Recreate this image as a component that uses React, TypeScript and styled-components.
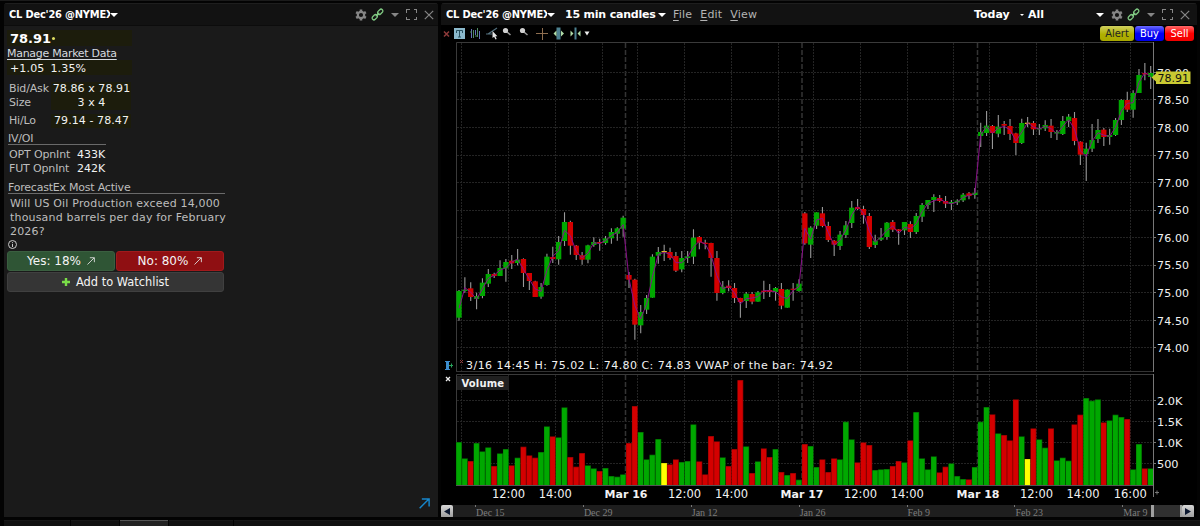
import React from "react";
import styled, { createGlobalStyle } from "styled-components";

const Global = createGlobalStyle`
  *, *::before, *::after { box-sizing: border-box; }
  html, body { margin: 0; padding: 0; background: #040404; }
  body { font-family: "DejaVu Sans", Verdana, sans-serif; font-size: 11px; color: #f0f0f0; overflow: hidden; }
`;

/* ---------- window shell ---------- */
const Screen = styled.main`
  width: 1200px; height: 526px; display: flex; flex-direction: column;
  background: #030303; border-top: 1px solid #1b1b1b; padding-top: 2px; overflow: hidden;
`;
const Panels = styled.div`
  display: flex; gap: 3px; height: 514px; padding: 0 3px 0 4px;
`;
const Panel = styled.section<{ $width: number; $bg: string }>`
  width: ${(p) => p.$width}px; height: 514px; background: ${(p) => p.$bg};
  display: flex; flex-direction: column; border-radius: 3px 3px 0 0; overflow: hidden; flex: none;
`;
const TitleBar = styled.header<{ $right: number }>`
  height: 22px; flex: none; display: flex; align-items: center; background: #121212;
  border-top: 1px solid #1e1e1e; padding: 0 ${(p) => p.$right}px 0 5px; white-space: nowrap;
`;
const Symbol = styled.span`
  font-family: "DejaVu Sans Condensed", "DejaVu Sans", sans-serif; font-stretch: condensed; letter-spacing: -0.2px;
  font-weight: 700; width: 101px; overflow: hidden; line-height: 16px; color: #fff; flex: none;
`;
const BoldLabel = styled.span<{ $width: number; $track?: number }>`
  font-weight: 700; color: #fff; width: ${(p) => p.$width}px; flex: none; line-height: 16px;
  letter-spacing: ${(p) => p.$track ?? 0}px;
`;
const Caret = styled.i<{ $half?: number; $color?: string; $gap?: number }>`
  width: 0; height: 0; flex: none; margin-right: ${(p) => p.$gap ?? 0}px;
  border: ${(p) => p.$half ?? 4}px solid transparent; border-bottom: 0;
  border-top-color: ${(p) => p.$color ?? "#fff"};
`;
const MenuItem = styled.span`
  color: #b4b4b4; margin-right: 8px; line-height: 16px; letter-spacing: 0.2px;
`;
const Mnemonic = styled.span`text-decoration: underline; text-underline-offset: 2px;`;
const Spacer = styled.div`flex: 1;`;
const WindowTools = styled.div`
  display: grid; grid-template-columns: repeat(5, 17px); place-items: center; flex: none;
`;

/* ---------- quote panel ---------- */
const Quote = styled.div`
  flex: 1; display: flex; flex-direction: column; padding: 4px 3px 0 3px; line-height: 14px; color: #bdbdbd;
  border-top: 1px solid #0c0c0c;
`;
const Shade = styled.div<{ $h: number }>`
  width: 125px; height: ${(p) => p.$h}px; background: #1c1c0c; color: #f2f2f2; padding: 2px 0 0 3px;
  display: flex; align-items: center; gap: 6px; letter-spacing: 0.15px;
`;
const Last = styled(Shade)`font-size: 13px; font-weight: 700; color: #fff; gap: 1px; letter-spacing: 0; padding-top: 1px;`;
const Tick = styled.i`width: 3px; height: 3px; border-radius: 2px; background: #dede62;`;
const Manage = styled.a`
  width: max-content; color: #d5d9df; text-decoration: underline; text-underline-offset: 2px; height: 14px; line-height: 15px;
  letter-spacing: -0.28px;
`;
const Pair = styled.div<{ $mt?: number }>`
  display: flex; height: 14px; margin-top: ${(p) => p.$mt ?? 0}px; padding-left: 2px; align-items: center;
`;
const Key = styled.span<{ $w: number }>`
  width: ${(p) => p.$w}px; flex: none; white-space: nowrap; letter-spacing: -0.15px;
`;
const Value = styled.span<{ $shade?: boolean }>`
  color: #f2f2f2; text-align: center; height: 14px; line-height: 14px; white-space: nowrap;
  ${(p) => p.$shade && "background: #1c1c0c; width: 80px; letter-spacing: 0.08px; padding-left: 1px;"}
`;
const SectionTitle = styled.div<{ $w: number; $mt: number }>`
  width: ${(p) => p.$w}px; margin: ${(p) => p.$mt}px 0 0 1px; height: 14px; line-height: 15px;
  border-bottom: 1px solid #6a6a6a; white-space: nowrap; letter-spacing: -0.22px;
`;
const Question = styled.p`
  margin: 3px 0 0 3px; width: 220px; line-height: 14.2px; height: 42px; letter-spacing: 0.18px;
`;
const ButtonRow = styled.div`display: flex; gap: 1px; margin-bottom: 1px;`;
const Button = styled.button<{ $bg: string; $edge: string; $w: number; $size: number }>`
  width: ${(p) => p.$w}px; height: 20px; padding: 0; border: 1px solid ${(p) => p.$edge}; border-radius: 3px;
  background: ${(p) => p.$bg}; color: #f4f4f4; font-family: inherit; font-size: ${(p) => p.$size}px;
  display: flex; justify-content: center; align-items: center; gap: 6px;
`;
const Corner = styled.div`display: flex; justify-content: flex-end; margin: auto 5px 8px 0;`;

/* ---------- chart panel ---------- */
const ChartTools = styled.div`
  height: 17px; flex: none; display: flex; background: #000; justify-content: space-between;
`;
const Orders = styled.div`display: flex; gap: 1px; padding: 1px 3px 0 0;`;
const Order = styled.button<{ $w: number; $bg: string; $fg: string }>`
  width: ${(p) => p.$w}px; height: 15px; border: 0; border-radius: 3px; padding: 0; background: ${(p) => p.$bg};
  color: ${(p) => p.$fg}; font: 11px/15px "DejaVu Sans Condensed", "DejaVu Sans", sans-serif; font-stretch: condensed;
`;
const Plot = styled.svg`
  display: block; flex: none; background: #000;
  text { font-family: "DejaVu Sans", Verdana, sans-serif; fill: #f2f2f2; }
`;
const Scroll = styled.div`
  height: 13px; display: flex; width: 753px; background: #1e1e1e; margin-top: 1px; flex: none;
`;
const ScrollArrow = styled.div`
  width: 12px; height: 13px; background: linear-gradient(#d6d6d6, #9a9a9a); border-radius: 2px;
  display: flex; align-items: center; justify-content: center; flex: none;
`;
const Dates = styled.div`flex: 1; display: flex; padding-left: 22px; overflow: hidden;`;
const DateMark = styled.span`
  width: 107.9px; flex: none; font: 10px/15px "Liberation Serif", "Times New Roman", serif; color: #7d7d7d; padding-left: 1px;
  background: linear-gradient(#777, #777) 0 0 / 1px 2px no-repeat;
`;
const Thumb = styled.div`
  width: 31px; background: #303030; border-left: 3px solid #a0a0a0; border-right: 2px solid #a0a0a0; flex: none; margin-left: -1px;
`;

/* ---------- bottom strip ---------- */
const Strip = styled.footer`display: flex; gap: 1px; height: 6px; margin-top: 3px; padding-left: 4px;`;
const Tab = styled.div<{ $w?: number; $on?: boolean }>`
  ${(p) => (p.$w ? `width: ${p.$w}px;` : "flex: 1;")}
  background: ${(p) => (p.$on ? "#222" : "#111")}; border-top: 1px solid ${(p) => (p.$on ? "#555" : "#181818")};
`;

/* ---------- icons ---------- */
const Gear = () => (
  <svg width="12" height="12" viewBox="0 0 12 12">
    <circle cx="6" cy="6" r="3.2" fill="none" stroke="#868686" strokeWidth="2.2" />
    {[0, 60, 120].map((a) => (
      <path key={a} d="M6 .4v2M6 9.6v2" stroke="#868686" strokeWidth="2.6" transform={`rotate(${a} 6 6)`} />
    ))}
  </svg>
);
const Link = () => (
  <svg width="13" height="13" viewBox="0 0 13 13" fill="none" stroke="#7fc882" strokeWidth="1.3">
    <rect x="-3" y="-1.8" width="6" height="3.6" rx="1.8" transform="translate(9.2 3.8) rotate(-45)" />
    <rect x="-3" y="-1.8" width="6" height="3.6" rx="1.8" transform="translate(3.8 9.2) rotate(-45)" />
    <path d="M4.8 8.2l3.4-3.4" />
  </svg>
);
const Expand = () => (
  <svg width="11" height="11" viewBox="0 0 11 11" fill="none" stroke="#868686" shapeRendering="crispEdges">
    <path d="M.5 3.5v-3h3M7.5.5h3v3M10.5 7.5v3h-3M3.5 10.5h-3v-3" />
  </svg>
);
const Close = () => (
  <svg width="10" height="10" viewBox="0 0 10 10" stroke="#868686" strokeWidth="1.2">
    <path d="M.8.8l8.4 8.4M9.2.8L.8 9.2" />
  </svg>
);
const Controls = () => (
  <WindowTools>
    <Gear />
    <Link />
    <Caret $half={4.5} $color="#868686" />
    <Expand />
    <Close />
  </WindowTools>
);
const ArrowUp = ({ size = 8, color = "#e0e0e0" }: { size?: number; color?: string }) => (
  <svg width={size} height={size} viewBox="0 0 10 10" fill="none" stroke={color} strokeWidth={size > 8 ? 1.3 : 1.1}>
    <path d={size > 8 ? "M.6 9.4L9 1M2.6.9h6.6v6.8" : "M.6 9.4L9 1M3.6.9h5.6v5.6"} />
  </svg>
);
const ToolIcons = () => (
  <svg width="160" height="17" viewBox="441 25 160 17" fill="none">
    <path d="M444 31.5l5 5M449 31.5l-5 5" stroke="#8d3a3a" strokeWidth="1.5" />
    <rect x="454" y="28" width="11" height="11" fill="#8bb9cc" />
    <path d="M456.5 33v-2.5h6V33M459.5 30.5v6.5M458 37h3" stroke="#28505f" />
    <path d="M471.5 29v9M475.5 30v5M479.5 31v8" stroke="#6470b8" />
    <path d="M473.5 30v8M477.5 28v9M470 32h2M475 36h3" stroke="#4f8a62" />
    <path d="M486 34h6M488 34l9-6" stroke="#526f7c" strokeWidth="1.2" />
    <path d="M492.5 31v7l1.6-1.3 1.4 2.8 1.2-.6-1.3-2.7h2z" fill="#e4e4e4" />
    <path d="M507 32l3.5 3M524 32l3.5 3" stroke="#9a9a9a" strokeWidth="1.5" />
    <circle cx="505.5" cy="30.5" r="2.6" fill="#d0d0d0" />
    <circle cx="522.5" cy="30.5" r="2.6" fill="#d0d0d0" />
    <path d="M542.5 28v12M536 33.5h12" stroke="#8e6e50" />
    <path d="M558.5 27.5v12" stroke="#4d8190" strokeWidth="4" />
    <path d="M553.5 33.5l3-3v6zM564 33.5l-3-3v6z" fill="#b1dda8" />
    <path d="M575.5 27.5v12" stroke="#4d8190" strokeWidth="2" />
    <path d="M573.5 33.5l-3-3v6zM577.5 33.5l3-3v6z" fill="#b1dda8" />
    <path d="M584.5 31.5h5l-2.5 4z" fill="#eee" />
  </svg>
);

/* ---------- market data ---------- */
// One candle per entry: tone, high, body top, body bottom, low (thirds of a pixel below the session origin).
const sessions: { top: number; rows: string }[] = [
  { top: 190, rows: "g300,303,383,392 g262,299,303,308 r277,295,321,333 g308,318,327,358 g265,278,318,325 g237,252,281,291 r248,252,258,264 g211,234,258,258 g207,216,235,275 r195,212,220,237 g177,209,219,226 r205,207,249,291 r249,249,273,300 r272,274,321,321 g279,291,320,326 g191,200,285,287 r170,201,207,219 g138,156,208,224 g67,96,153,168 r92,96,167,194 r165,167,195,210 r186,196,209,224 g164,166,209,220 g142,156,165,170 r146,156,159,182 g138,145,159,164 g115,126,145,161 g112,115,131,152 g77,83,116,140" },
  { top: 190, rows: "r246,255,269,294 r266,269,404,449 g345,366,406,430 g315,324,359,372 g193,200,323,323 g171,186,197,221 y164,183,187,213 r173,186,204,209 r186,198,242,246 g183,204,238,247 g183,199,204,219 g118,143,200,222 r138,141,158,178 r149,158,162,178 r158,159,204,260 r183,204,309,332 g273,290,309,313 r271,287,294,304 r279,294,324,339 r323,324,336,383 g306,311,333,354 r306,312,335,343 g303,307,335,335 r272,302,306,327 r282,300,306,321 g291,294,306,332 r279,297,347,358 g298,299,353,353 r279,296,299,332 g268,281,303,305" },
  { top: 180, rows: "r96,100,190,194 g139,143,194,234 g97,97,137,147 r81,100,138,142 r125,138,180,186 r180,182,194,228 g153,164,198,210 g123,136,165,174 g63,83,129,144 r57,81,87,90 r77,87,105,131 r99,108,201,207 g164,182,195,204 g144,173,179,183 g126,128,171,179 r120,126,149,156 r147,148,153,194 g126,126,151,165 r124,132,156,174 g99,108,156,162 g69,75,110,126 g60,60,75,87 g43,51,60,96 r45,54,63,67 r48,63,71,84 g60,66,71,90 g58,62,67,75 g39,44,61,66 r36,40,48,58 g24,38,45,56" },
  { top: 50, rows: "g218,246,258,291 g183,227,249,258 r225,228,249,297 g195,230,251,262 r213,222,227,255 r207,228,252,270 r248,250,279,315 g206,219,279,282 y201,218,222,231 r213,219,238,255 g222,235,238,255 g211,225,235,243 r207,227,246,264 g240,246,251,270 g198,213,252,255 g192,200,213,231 r186,204,273,286 r274,275,314,345 g278,296,312,393 g222,270,296,306 g207,240,267,279 r234,239,261,288 g236,255,261,284 g204,210,255,258 g148,150,210,225 r125,150,179,186 g121,129,179,203 g57,75,129,129 r39,69,73,91 g48,69,81,117" },
];
const candles = sessions.flatMap(({ top, rows }) =>
  rows.split(" ").map((row) => {
    const [h, t, b, l] = row.slice(1).split(",").map((n) => top + Number(n) / 3);
    return { tone: row[0], h, t, b, l };
  }),
);
const volumes =
  "g261 g310 r318 g264 g289 g277 r333 g295 g282 r331 g308 r275 r301 r308 g291 g214 r244 g247 g157 r306 r335 r294 g331 g340 r348 g339 g363 g365 g358 r264 r153 g231 g313 g299 g252 y324 r328 r313 g321 g318 g208 r319 r358 r243 r259 g307 r333 r282 r75 g274 r354 g319 r280 r306 g282 r351 g360 r354 g374 r267 g273 g336 r313 r351 r310 g313 g200 g253 r322 r262 r270 g345 g343 g342 r333 r318 g322 r256 g171 g310 g343 g304 r352 r335 g325 g363 g372 r373 g336 g200 g156 r178 g235 r240 r256 r133 g244 y312 r220 g253 g278 r220 g316 g308 g317 r208 r179 g129 g137 g133 r202 g196 g179 g186 r192 g343 g267 r340 g340"
    .split(" ")
    .map((v) => ({ tone: v[0], y: 355 + Number(v.slice(1)) / 3 }));
const fill: Record<string, string> = { g: "#00a800", r: "#d40000", y: "#e0c020" };
const shade: Record<string, string> = { g: "#006800", r: "#8c0000", y: "#d8d800" };
const cx = (i: number) => 459 + i * 5.862;
const hours = [461, 508, 555, 602, 637, 684, 731, 778, 813, 860, 907, 953, 989, 1036, 1083, 1130];
const days = [625.5, 802, 977.5];
const prices = Array.from({ length: 11 }, (_, i) => ({ label: (79 - i / 2).toFixed(2), y: 72.4 + i * 27.55 }));
const volTicks = [
  { label: "2.0K", y: 400.5 },
  { label: "1.5K", y: 421.5 },
  { label: "1.0K", y: 442.5 },
  { label: "500", y: 463.5 },
];
const times: [string, number, boolean?][] = [
  ["12:00", 508.5], ["14:00", 555.3], ["Mar 16", 626, true], ["12:00", 684.5], ["14:00", 731.5], ["Mar 17", 802, true],
  ["12:00", 860.5], ["14:00", 907.3], ["Mar 18", 978, true], ["12:00", 1036.5], ["14:00", 1083], ["16:00", 1130.3],
];

const Verticals = ({ top, bottom }: { top: number; bottom: number }) => (
  <g>
    {hours.map((x) => (
      <path key={x} d={`M${x + 0.5} ${top}V${bottom}`} stroke="#242424" strokeDasharray="2 1" shapeRendering="crispEdges" />
    ))}
    {days.map((x) => (
      <path key={x} d={`M${x} ${top}V${bottom}`} stroke="#343434" strokeWidth="1.5" strokeDasharray="5 2" />
    ))}
  </g>
);

const PricePlot = () => (
  <Plot width="756" height="331" viewBox="441 42 756 331">
    <Verticals top={43} bottom={371} />
    {prices.map((p) => (
      <path key={p.label} d={`M457 ${Math.floor(p.y) + 0.5}H1153`} stroke="#242424" strokeDasharray="2 1" shapeRendering="crispEdges" />
    ))}
    <path d="M456.5 372V42.5H1153.5" stroke="#3a3a3a" fill="none" />
    <path d="M456 371.5H1153" stroke="#333" />
    <path d="M1153.5 42V372" stroke="#777" />
    {candles.map((c, i) => (
      <g key={i}>
        <path d={`M${cx(i)} ${c.h}V${c.l}`} stroke="#999" strokeWidth="1.1" />
        <rect x={cx(i) - 2.65} y={c.t} width="5.3" height={Math.max(1.2, c.b - c.t)} fill={fill[c.tone]} />
      </g>
    ))}
    <polyline
      points={candles.map((c, i) => `${cx(i)},${i === 0 ? 308.3 : (c.h + c.l + c.t + c.b) / 4}`).join(" ")}
      fill="none" stroke="#8a108a" strokeWidth="1"
    />
    {prices.map((p) => (
      <g key={p.label}>
        <path d={`M1153 ${Math.floor(p.y) + 0.5}h3`} stroke="#777" />
        <text x="1157" y={p.y + 4.2} fontSize="11" textLength="32">{p.label}</text>
      </g>
    ))}
    <path d="M1151.5 77.5L1156 73.5V71.5H1190.5V84H1156V81.5z" fill="#c9c932" />
    <text x="1157.5" y="82" fontSize="11" style={{ fill: "#111" }}>78.91</text>
    <path d="M460 360l3 3M463 360l-3 3" stroke="#8d3a3a" />
    <text x="466" y="369" fontSize="11" textLength="367">3/16 14:45 H: 75.02 L: 74.80 C: 74.83 VWAP of the bar: 74.92</text>
    <path d="M447.5 361v9" stroke="#3d8ed0" strokeWidth="3" />
    <path d="M445 361.5h5M445 369.5h5" stroke="#3d8ed0" />
    <path d="M449 365.5h4M451.5 363.5v4" stroke="#27a35b" />
  </Plot>
);

const VolumePlot = () => (
  <Plot width="756" height="131" viewBox="441 373 756 131">
    <Verticals top={375} bottom={485} />
    {volTicks.map((v) => (
      <path key={v.label} d={`M457 ${v.y}H1153`} stroke="#242424" strokeDasharray="2 1" shapeRendering="crispEdges" />
    ))}
    <path d="M456.5 485V374.5H1153" stroke="#3a3a3a" fill="none" />
    {volumes.map((v, i) => (
      <g key={i}>
        <rect x={cx(i) - 2.93} y={v.y} width="5.86" height={485 - v.y} fill={shade[v.tone]} />
        <rect x={cx(i) - 2.63} y={v.y + 0.7} width="4.9" height={Math.max(0, 484.3 - v.y)} fill={v.tone === "y" ? "#ffff00" : fill[v.tone]} />
      </g>
    ))}
    <path d="M456 485.5H1153" stroke="#555" />
    <path d="M1153.5 374V497" stroke="#777" />
    <rect x="457" y="376" width="52" height="14" fill="#202020" />
    <text x="461.5" y="387" fontSize="10" fontWeight="700" textLength="42.5">Volume</text>
    <path d="M446 377l4 4M450 377l-4 4" stroke="#eee" strokeWidth="1.3" />
    {volTicks.map((v) => (
      <g key={v.label}>
        <path d={`M1153 ${v.y}h3`} stroke="#777" />
        <text x="1157" y={v.y + 4.5} fontSize="11.3">{v.label}</text>
      </g>
    ))}
    {times.map(([label, x, bold]) => (
      <text key={x} x={x} y="498" fontSize={bold ? 11 : 11.5} fontWeight={bold ? 700 : 400} textAnchor="middle">{label}</text>
    ))}
    <path d="M1157 490.5v4M1155 492.5h4" stroke="#777" />
  </Plot>
);

export default function App() {
  return (
    <Screen>
      <Global />
      <Panels>
        <Panel $width={434} $bg="#1a1a1a">
          <TitleBar $right={1}>
            <Symbol>CL Dec'26 @NYMEX</Symbol>
            <Caret />
            <Spacer />
            <Controls />
          </TitleBar>
          <Quote>
            <Last $h={16}>78.91<Tick /></Last>
            <Manage>Manage Market Data</Manage>
            <Shade $h={15}><span>+1.05</span><span>1.35%</span></Shade>
            <Pair $mt={7}><Key $w={42}>Bid/Ask</Key><Value $shade>78.86 x 78.91</Value></Pair>
            <Pair><Key $w={42}>Size</Key><Value $shade>3 x 4</Value></Pair>
            <Pair $mt={4}><Key $w={42}>Hi/Lo</Key><Value $shade>79.14 - 78.47</Value></Pair>
            <SectionTitle $w={98} $mt={3}>IV/OI</SectionTitle>
            <Pair $mt={3}><Key $w={68}>OPT OpnInt</Key><Value>433K</Value></Pair>
            <Pair><Key $w={68}>FUT OpnInt</Key><Value>242K</Value></Pair>
            <SectionTitle $w={217} $mt={4}>ForecastEx Most Active</SectionTitle>
            <Question>Will US Oil Production exceed 14,000 thousand barrels per day for February 2026?</Question>
            <svg width="11" height="12" viewBox="0 0 11 12" fill="none" stroke="#c8c8c8">
              <circle cx="5.5" cy="5.5" r="4" />
              <path d="M5.5 5v3M5.5 3.2v1" />
            </svg>
            <ButtonRow>
              <Button $w={108} $size={12} $bg="#2f5535" $edge="#3a5f40">Yes: 18% <ArrowUp /></Button>
              <Button $w={108} $size={12} $bg="#8f0f12" $edge="#a01a1c">No: 80% <ArrowUp /></Button>
            </ButtonRow>
            <Button $w={217} $size={11.4} $bg="#353535" $edge="#404040">
              <svg width="8" height="8" viewBox="0 0 8 8"><path d="M4 0v8M0 4h8" stroke="#7ade48" strokeWidth="2.4" /></svg>
              Add to Watchlist
            </Button>
            <Corner><ArrowUp size={11} color="#1787cc" /></Corner>
          </Quote>
        </Panel>
        <Panel $width={756} $bg="#000">
          <TitleBar $right={4}>
            <Symbol>CL Dec'26 @NYMEX</Symbol>
            <Caret $gap={10} />
            <BoldLabel $width={93} $track={-0.2}>15 min candles</BoldLabel>
            <Caret $gap={7} />
            <MenuItem><Mnemonic>F</Mnemonic>ile</MenuItem>
            <MenuItem><Mnemonic>E</Mnemonic>dit</MenuItem>
            <MenuItem><Mnemonic>V</Mnemonic>iew</MenuItem>
            <Spacer />
            <BoldLabel $width={46}>Today</BoldLabel>
            <Caret $half={2} $gap={4} />
            <BoldLabel $width={68}>All</BoldLabel>
            <Caret $gap={4} />
            <Controls />
          </TitleBar>
          <ChartTools>
            <ToolIcons />
            <Orders>
              <Order $w={34} $bg="linear-gradient(#d0d060,#b0b000 55%,#a8a800)" $fg="#222">Alert</Order>
              <Order $w={29} $bg="linear-gradient(#6a6aff,#0000f4 50%,#0000ea)" $fg="#fff">Buy</Order>
              <Order $w={29} $bg="linear-gradient(#ff6868,#ff0000 50%,#f00000)" $fg="#fff">Sell</Order>
            </Orders>
          </ChartTools>
          <PricePlot />
          <VolumePlot />
          <Scroll>
            <ScrollArrow><svg width="6" height="7" viewBox="0 0 6 7"><path d="M6 0v7L0 3.5z" fill="#0c1830" /></svg></ScrollArrow>
            <Dates>
              {["Dec 15", "Dec 29", "Jan 12", "Jan 26", "Feb 9", "Feb 23", "Mar 9"].map((d) => <DateMark key={d}>{d}</DateMark>)}
            </Dates>
            <Thumb />
            <ScrollArrow><svg width="6" height="7" viewBox="0 0 6 7"><path d="M0 0v7L6 3.5z" fill="#0c1830" /></svg></ScrollArrow>
          </Scroll>
        </Panel>
      </Panels>
      <Strip>
        <Tab $w={66} />
        <Tab $w={48} />
        <Tab $w={48} $on />
        <Tab $w={64} />
        <Tab />
      </Strip>
    </Screen>
  );
}
